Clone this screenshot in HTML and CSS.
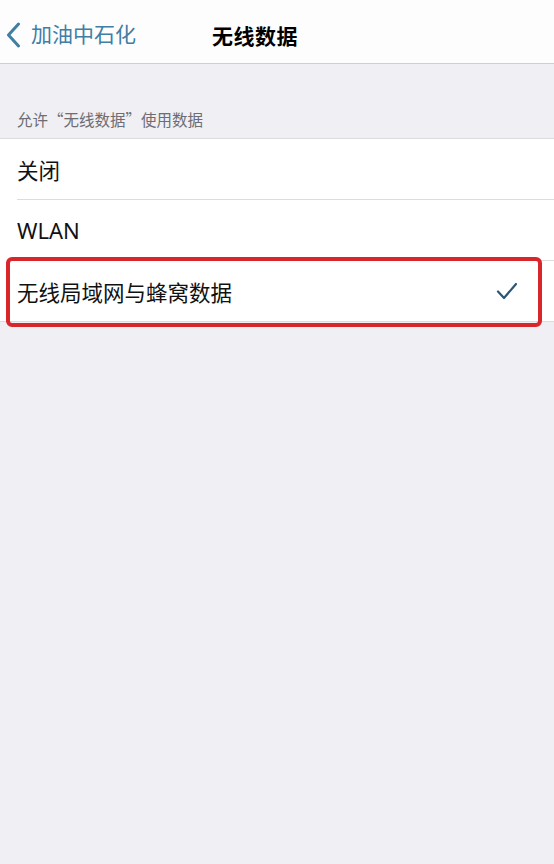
FILE: index.html
```html
<!DOCTYPE html>
<html>
  <head>
    <meta charset="utf-8" />
    <title>无线数据</title>
    <link rel="stylesheet" href="styles.css">
  </head>
  <body>
    <div class="navbar">
      <a class="back" href="#">
        <svg class="back-icon" width="15" height="26" viewBox="0 0 15 26">
          <path d="M12.5 2 L2.5 13 L12.5 24" fill="none" stroke="currentColor" stroke-width="3" stroke-linecap="round" stroke-linejoin="round" />
        </svg>
        <span>加油中石化</span>
      </a>
      <h1 class="nav-title">无线数据</h1>
    </div>

    <div class="section-header">允许“无线数据”使用数据</div>

    <ul class="list">
      <li class="row">关闭</li>
      <li class="row row-latin">WLAN</li>
      <li class="row row-selected">
        <span>无线局域网与蜂窝数据</span>
        <svg class="check" width="22" height="18" viewBox="0 0 22 18">
          <path d="M2 9.5 L8 16 L20 2" fill="none" stroke="currentColor" stroke-width="2.2" stroke-linecap="round" stroke-linejoin="round" />
        </svg>
      </li>
    </ul>
  </body>
</html>
```

FILE: styles.css
```css
:root {
  --tint: #3f7ea5;
  --background: #f0eff3;
  --separator: #dcdce0;
  --text-primary: #111;
  --text-secondary: #6d6d72;
  --highlight: #d9262b;
}

body {
  margin: 0;
  min-height: 100vh;
  background-color: var(--background);
  font-family: "Noto Sans CJK SC", "Noto Sans", sans-serif;
  color: var(--text-primary);
}

.navbar {
  position: relative;
  display: flex;
  align-items: center;
  height: 64px;
  background-color: #fdfdfd;
  border-bottom: 1px solid #cfcfd3;
  box-sizing: border-box;
}

.back {
  display: flex;
  align-items: center;
  gap: 10px;
  padding-left: 6px;
  padding-top: 6px;
  color: var(--tint);
  text-decoration: none;
  font-size: 21px;
}

.back span {
  margin-top: -4px;
}

.back-icon {
  display: block;
}

.nav-title {
  position: absolute;
  left: 212px;
  top: 0;
  margin: 0;
  line-height: 70px;
  font-size: 21px;
  font-weight: 700;
  letter-spacing: 0.5px;
  color: #000;
}

.section-header {
  padding: 42px 17px 6px;
  font-size: 15.5px;
  line-height: 26px;
  color: var(--text-secondary);
}

.list {
  list-style: none;
  margin: 0;
  padding: 0 0 0 17px;
  background-color: #fff;
  border-top: 1px solid var(--separator);
  border-bottom: 1px solid var(--separator);
}

.row {
  display: flex;
  align-items: center;
  justify-content: space-between;
  height: 60px;
  padding-right: 36px;
  font-size: 21.5px;
  border-bottom: 1px solid var(--separator);
}

.row:last-child {
  border-bottom: none;
}

.row-latin {
  font-family: "Noto Sans", "Noto Sans CJK SC", sans-serif;
  font-size: 22px;
}

.row-selected {
  position: relative;
}

/* red frame drawn round the selected option */
.row-selected::after {
  content: "";
  position: absolute;
  left: -11px;
  right: 12px;
  top: -4px;
  bottom: -6px;
  border: 4px solid var(--highlight);
  border-radius: 6px;
}

.check {
  color: #2c5774;
}
```
